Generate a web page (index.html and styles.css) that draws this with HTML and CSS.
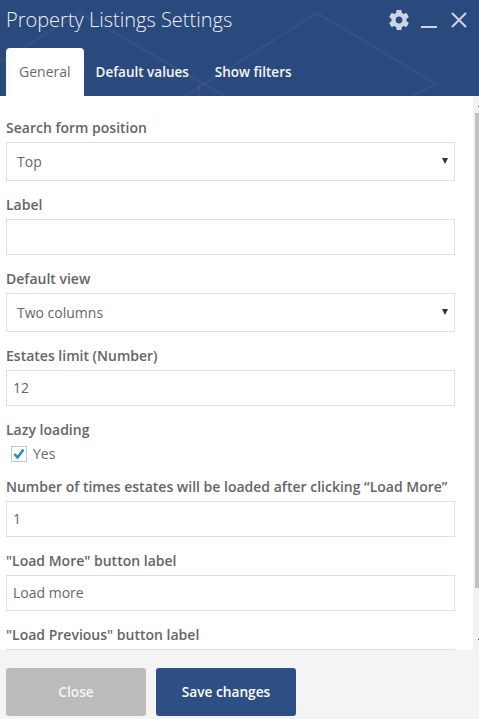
FILE: index.html
```html
<!DOCTYPE html>
<html>
<head>
  <title>Property Listings Settings</title>
  <link rel="stylesheet" href="styles.css">
</head>
<body>
  <div class="modal">
    <div class="modal-header">
      <svg class="header-pattern" viewBox="0 0 479 96" fill="none" stroke="#fff" stroke-opacity="0.045" stroke-width="2.5">
        <path d="M-10 68 L80 13 L225 96"/>
        <path d="M185 96 L317 13 L436 84 L412 96"/>
        <path d="M199 84 L199 96"/>
      </svg>
      <div class="title-row">
        <h1 class="modal-title">Property Listings Settings</h1>
        <div class="header-icons">
          <svg class="icon-gear" width="24" height="24" viewBox="0 0 24 24" fill="currentColor">
            <path d="M19.43 12.98c.04-.32.07-.64.07-.98s-.03-.66-.07-.98l2.11-1.65c.19-.15.24-.42.12-.64l-2-3.46c-.12-.22-.39-.3-.61-.22l-2.49 1c-.52-.4-1.08-.73-1.69-.98l-.38-2.65C14.46 2.18 14.25 2 14 2h-4c-.25 0-.46.18-.49.42l-.38 2.65c-.61.25-1.17.59-1.69.98l-2.49-1c-.23-.09-.49 0-.61.22l-2 3.46c-.13.22-.07.49.12.64l2.11 1.65c-.04.32-.07.65-.07.98s.03.66.07.98l-2.11 1.65c-.19.15-.24.42-.12.64l2 3.46c.12.22.39.3.61.22l2.49-1c.52.4 1.08.73 1.69.98l.38 2.65c.03.24.24.42.49.42h4c.25 0 .46-.18.49-.42l.38-2.65c.61-.25 1.17-.59 1.69-.98l2.49 1c.23.09.49 0 .61-.22l2-3.46c.12-.22.07-.49-.12-.64l-2.11-1.65zM12 15.5c-1.93 0-3.5-1.57-3.5-3.5s1.57-3.5 3.5-3.5 3.5 1.57 3.5 3.5-1.57 3.5-3.5 3.5z"/>
          </svg>
          <span class="icon-minimize"></span>
          <svg class="icon-close" width="16" height="16" viewBox="0 0 16 16" fill="none" stroke="currentColor" stroke-width="2">
            <path d="M1 1 L15 15 M15 1 L1 15"/>
          </svg>
        </div>
      </div>
      <div class="tabs">
        <div class="tab active">General</div>
        <div class="tab">Default values</div>
        <div class="tab">Show filters</div>
      </div>
    </div>
    <div class="modal-body">
      <div class="form">
        <div class="field">
          <label class="field-label">Search form position</label>
          <div class="select">Top<span class="arrow"></span></div>
        </div>
        <div class="field">
          <label class="field-label">Label</label>
          <div class="input"></div>
        </div>
        <div class="field">
          <label class="field-label">Default view</label>
          <div class="select">Two columns<span class="arrow"></span></div>
        </div>
        <div class="field">
          <label class="field-label">Estates limit (Number)</label>
          <div class="input">12</div>
        </div>
        <div class="field">
          <label class="field-label">Lazy loading</label>
          <div class="checkbox-row">
            <span class="checkbox">
              <svg width="12" height="12" viewBox="0 0 12 12" fill="none" stroke="#1e8cbe" stroke-width="2.4">
                <path d="M1.5 6 L4.5 9.5 L10.5 1.5"/>
              </svg>
            </span>
            Yes
          </div>
        </div>
        <div class="field">
          <label class="field-label">Number of times estates will be loaded after clicking “Load More”</label>
          <div class="input">1</div>
        </div>
        <div class="field">
          <label class="field-label">"Load More" button label</label>
          <div class="input">Load more</div>
        </div>
        <div class="field">
          <label class="field-label">"Load Previous" button label</label>
          <div class="input"></div>
        </div>
      </div>
      <div class="scrollbar">
        <span class="scroll-arrow"></span>
        <div class="scroll-thumb"></div>
        <span class="scroll-arrow scroll-arrow-end"></span>
      </div>
    </div>
    <div class="modal-footer">
      <button class="btn btn-close">Close</button>
      <button class="btn btn-save">Save changes</button>
    </div>
  </div>
</body>
</html>
```

FILE: styles.css
```css
:root {
  --navy: #2a4a7d;
  --border: #dfdfdf;
  --text: #656565;
}

html, body {
  height: 100%;
}

body {
  margin: 0;
  background: #fff;
  color: var(--text);
  font-family: 'Open Sans', sans-serif;
  font-size: 14px;
  overflow: hidden;
}

.modal {
  display: flex;
  flex-direction: column;
  height: 100%;
}

.modal-header {
  background: var(--navy);
  height: 96px;
  flex-shrink: 0;
  position: relative;
  overflow: hidden;
}

.header-pattern {
  position: absolute;
  top: 0;
  left: 0;
  width: 479px;
  height: 96px;
}

.title-row {
  display: flex;
  justify-content: space-between;
  align-items: center;
  height: 40px;
  padding: 0 12px 0 6px;
  position: relative;
}

.modal-title {
  margin: -2px 0 0;
  color: #eef1f6;
  font-size: 20px;
  font-weight: 300;
}

.header-icons {
  display: flex;
  align-items: center;
  color: #ccd5e3;
}

.icon-minimize {
  width: 16px;
  height: 2px;
  background: currentColor;
  margin: 14px 14px 0 10px;
}

.tabs {
  display: flex;
  padding: 8px 0 0 6px;
  position: relative;
}

.tab {
  padding: 0 12px;
  height: 48px;
  line-height: 48px;
  color: #f4f6f9;
  font-weight: 600;
  font-size: 13.5px;
  margin-right: 2px;
}

.tab.active {
  background: #fff;
  color: #6a6a6a;
  font-weight: 400;
  font-size: 14px;
  border-radius: 4px 4px 0 0;
  padding: 0 13px;
  margin-right: 0;
}

.modal-body {
  flex: 1;
  display: flex;
  min-height: 0;
  overflow: hidden;
}

.form {
  flex: 1;
  padding: 22px 18px 0 6px;
}

.field {
  margin-bottom: 14px;
}

.field-label {
  display: block;
  font-weight: 600;
  margin-bottom: 5px;
  line-height: 19px;
}

.input, .select {
  box-sizing: border-box;
  border: 1px solid var(--border);
  background: #fff;
  height: 36px;
  line-height: 34px;
  padding: 0 6px;
  color: #666;
}

.select {
  height: 39px;
  line-height: 37px;
  padding: 0 10px;
  position: relative;
}

.arrow {
  position: absolute;
  right: 6px;
  top: 15px;
  border-left: 3px solid transparent;
  border-right: 3px solid transparent;
  border-top: 6px solid #333;
}

.checkbox-row {
  display: flex;
  align-items: center;
  gap: 6px;
  padding-left: 5px;
  color: #6a6a6a;
}

.checkbox {
  box-sizing: border-box;
  width: 16px;
  height: 16px;
  border: 1px solid #c4c8cc;
  display: flex;
  align-items: center;
  justify-content: center;
}

.scrollbar {
  width: 6px;
  background: #f1f1f1;
  flex-shrink: 0;
  position: relative;
  display: flex;
  flex-direction: column;
  align-items: flex-end;
}

.scroll-arrow {
  width: 1px;
  height: 1px;
  background: #555;
  margin-top: 10px;
}

.scroll-arrow-end {
  margin-top: 51px;
}

.scroll-thumb {
  width: 4px;
  height: 475px;
  margin-top: 6px;
  background: #c1c1c1;
}

.modal-footer {
  display: flex;
  gap: 10px;
  height: 69px;
  flex-shrink: 0;
  box-sizing: border-box;
  padding: 18px 6px 0;
  background: #f4f4f4;
}

.btn {
  width: 140px;
  height: 48px;
  border: none;
  border-radius: 3px;
  padding: 0 0 2px;
  color: #fff;
  font-family: inherit;
  font-size: 13.7px;
  font-weight: 600;
}

.btn-close {
  background: #bbb;
  color: #f5f5f5;
}

.btn-save {
  background: #2e4f84;
}
```
